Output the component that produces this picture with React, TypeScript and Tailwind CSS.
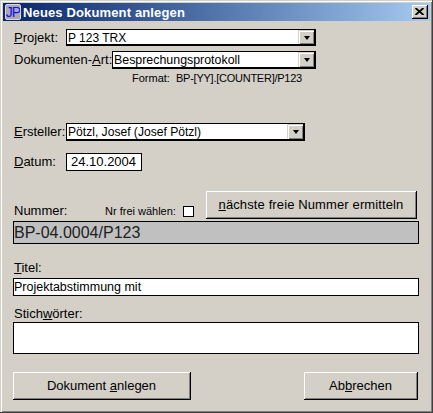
const sans = "font-['Tahoma','Liberation_Sans',sans-serif]";

function Arrow() {
  return (
    <div className="w-4 h-full bg-[#d4d0c8] border-t border-l border-t-[#d4d0c8] border-l-[#d4d0c8] shadow-[inset_1px_1px_0_#fff,inset_-1px_-1px_0_#808080] flex items-center justify-center shrink-0">
      <div className="w-0 h-0 border-x-[3.5px] border-x-transparent border-t-[4px] border-t-black" />
    </div>
  );
}

function Select({ text, className, textClass }: { text: string; className: string; textClass: string }) {
  return (
    <div className={`bg-white border-2 border-black border-l border-t flex items-center justify-between ${className}`}>
      <span className={`pl-px pt-px leading-none text-black whitespace-nowrap ${textClass}`}>{text}</span>
      <Arrow />
    </div>
  );
}

function Button({ children, className }: { children: React.ReactNode; className: string }) {
  return (
    <button className={`bg-[#d4d0c8] border-b border-r border-black shadow-[inset_1px_1px_0_#fff,inset_-1px_-1px_0_#808080] flex items-center justify-center text-[13px] text-black ${className}`}>
      {children}
    </button>
  );
}

export default function App() {
  return (
    <div className={`${sans} w-[433px] h-[413px] overflow-hidden bg-[#d4d0c8] text-black text-[13px] border-b border-r border-[#404040] shadow-[inset_1px_1px_0_#d4d0c8,inset_2px_2px_0_#fff,inset_-1px_-1px_0_#808080] pt-[3px] px-[3px]`}>
      <div className="h-[18px] w-[427px] bg-gradient-to-r from-[#0a246a] to-[#a6caf0] flex items-center justify-between pr-0.5">
        <div className="flex items-center gap-[2px] pl-[2px]">
          <div className="w-4 h-4 bg-[#a9a9b4] border border-[#d8d8d8] rounded-[2px] flex items-center justify-center text-[#1010f0] text-[14px] leading-none tracking-[-1px] overflow-hidden">
            JP
          </div>
          <span className="text-white font-bold text-[13px] leading-none tracking-[0.14px]">Neues Dokument anlegen</span>
        </div>
        <div className="w-4 h-3.5 bg-[#d4d0c8] border-r border-b border-black shadow-[inset_1px_1px_0_#fff,inset_-1px_-1px_0_#808080] flex items-center justify-center">
          <svg width="9" height="7" viewBox="0 0 9 7" fill="none" stroke="black" strokeWidth="1.8">
            <path d="M0.5 0L8.5 7M8.5 0L0.5 7" />
          </svg>
        </div>
      </div>

      <div className="pl-[10px] pr-[11px]">
        <div className="mt-2 flex items-center h-[17px]">
          <span className="w-[53px] pl-px"><u>P</u>rojekt:</span>
          <Select text="P 123 TRX" className="w-[250px] h-[17px]" textClass="text-[12px]" />
        </div>
        <div className="mt-[5px] flex items-center h-[18px]">
          <span className="w-[99px] pl-px whitespace-nowrap">Dokumenten-<u>A</u>rt:</span>
          <Select text="Besprechungsprotokoll" className="w-[204px] h-[18px]" textClass="text-[12.4px]" />
        </div>
        <div className="mt-[2px] pl-[119px] text-[11px] leading-[14px]">Format:&nbsp; <span className="tracking-[-0.25px]">BP-[YY].[COUNTER]/P123</span></div>

        <div className="mt-[38px] flex items-center h-[18px]">
          <span className="w-[53px] pl-px"><u>E</u>rsteller:</span>
          <Select text="Pötzl, Josef (Josef Pötzl)" className="w-[239px] h-[18px]" textClass="text-[12.1px]" />
        </div>
        <div className="mt-3 flex items-center h-[18px]">
          <span className="w-[53px] pl-px"><u>D</u>atum:</span>
          <div className="w-[76px] h-[18px] bg-white border border-black flex items-center pl-1 text-[13px]">24.10.2004</div>
        </div>

        <div className="mt-5 flex items-end h-[28px]">
          <span className="w-[92px] pl-px leading-4">Nummer:</span>
          <span className="w-[78px] text-[11px] leading-4">Nr frei wählen:</span>
          <div className="w-[11px] h-[11px] bg-white border border-black mb-[2px]" />
          <Button className="ml-3 w-[211px] h-[28px]"><span className="tracking-[0.12px]"><u>n</u>ächste freie Nummer ermitteln</span></Button>
        </div>
        <div className="mt-[2px] h-[23px] w-[406px] bg-[#c0c0c0] border border-black flex items-center text-[16px] leading-none text-[#202020]">BP-04.0004/P123</div>

        <div className="mt-[16px] pl-px h-4 leading-4"><u>T</u>itel:</div>
        <div className="mt-[2px] h-[18px] w-[406px] bg-white border border-black flex items-center text-[12.5px]">Projektabstimmung mit</div>

        <div className="mt-[10px] pl-px h-4 leading-4">Stich<u>w</u>örter:</div>
        <div className="h-8 w-[406px] bg-white border border-black" />

        <div className="mt-[18px] flex justify-between w-[405px]">
          <Button className="w-[178px] h-[28px]"><span>Dokument <u>a</u>nlegen</span></Button>
          <Button className="w-[114px] h-[28px]"><span>Ab<u>b</u>rechen</span></Button>
        </div>
      </div>
    </div>
  );
}
